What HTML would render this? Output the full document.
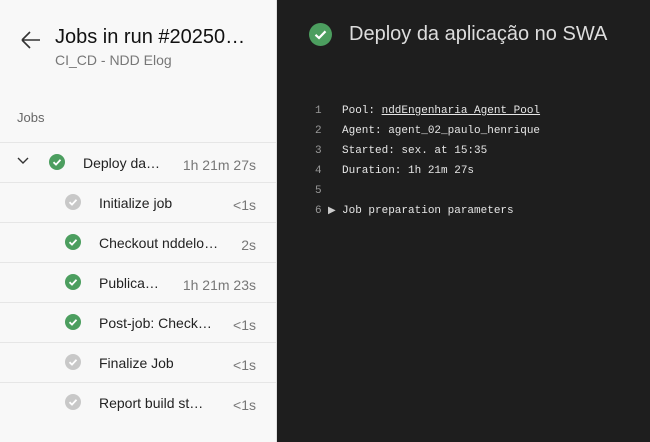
<!DOCTYPE html>
<html><head><meta charset="utf-8"><style>
*{margin:0;padding:0;box-sizing:border-box}
body{width:650px;height:442px;overflow:hidden;font-family:"Liberation Sans",sans-serif;background:#1e1e1e;position:relative}
#left{position:absolute;left:0;top:0;width:277px;height:442px;background:#f8f8f8;border-right:1px solid #e0e0e0}
.abs{position:absolute;white-space:nowrap}
.row{position:absolute;left:0;width:276px;height:40px;border-top:1px solid #e6e6e6}
.ic{position:absolute;width:16px;height:16px;border-radius:50%}
.ic svg{position:absolute;left:0;top:0}
.g{background:#4c9e5f}.gr{background:#c8c8c8}
.nm{position:absolute;font-size:14px;color:#222;top:12px}
.tm{position:absolute;right:20px;font-size:14px;color:#777;top:14px}
#right .ln{position:absolute;left:315px;font-family:"Liberation Mono",monospace;font-size:11px;color:#999}
#right .tx{position:absolute;left:342px;font-family:"Liberation Mono",monospace;font-size:11px;color:#e6e6e6;white-space:nowrap}
</style></head><body>
<div id="left">
<svg class="abs" style="left:21px;top:31px" width="20" height="18" viewBox="0 0 20 18"><path d="M1 9H19M1 9L9 1M1 9L9 17" stroke="#333" stroke-width="1.6" fill="none"/></svg>
<div class="abs" style="left:55px;top:26px;font-size:20px;color:#111">Jobs in run #20250…</div>
<div class="abs" style="left:55px;top:52px;font-size:14px;color:#777">CI_CD - NDD Elog</div>
<div class="abs" style="left:17px;top:110px;font-size:13px;color:#666">Jobs</div>
<div class="row" style="top:142px">
<svg class="abs" style="left:17px;top:14px" width="12" height="8" viewBox="0 0 12 8"><path d="M1 1L6 6L11 1" stroke="#333" stroke-width="1.4" fill="none"/></svg>
<div class="ic g" style="left:49px;top:11px"><svg width="16" height="16"><path d="M4.5 8.2L7 10.6L11.5 5.8" stroke="#fff" stroke-width="1.8" fill="none"/></svg></div>
<div class="nm" style="left:83px">Deploy da…</div><div class="tm">1h 21m 27s</div></div>
<div class="row" style="top:182px"><div class="ic gr" style="left:65px;top:11px"><svg width="16" height="16"><path d="M4.5 8.2L7 10.6L11.5 5.8" stroke="#fff" stroke-width="1.8" fill="none"/></svg></div><div class="nm" style="left:99px">Initialize job</div><div class="tm">&lt;1s</div></div>
<div class="row" style="top:222px"><div class="ic g" style="left:65px;top:11px"><svg width="16" height="16"><path d="M4.5 8.2L7 10.6L11.5 5.8" stroke="#fff" stroke-width="1.8" fill="none"/></svg></div><div class="nm" style="left:99px">Checkout nddelo…</div><div class="tm">2s</div></div>
<div class="row" style="top:262px"><div class="ic g" style="left:65px;top:11px"><svg width="16" height="16"><path d="M4.5 8.2L7 10.6L11.5 5.8" stroke="#fff" stroke-width="1.8" fill="none"/></svg></div><div class="nm" style="left:99px">Publica…</div><div class="tm">1h 21m 23s</div></div>
<div class="row" style="top:302px"><div class="ic g" style="left:65px;top:11px"><svg width="16" height="16"><path d="M4.5 8.2L7 10.6L11.5 5.8" stroke="#fff" stroke-width="1.8" fill="none"/></svg></div><div class="nm" style="left:99px">Post-job: Check…</div><div class="tm">&lt;1s</div></div>
<div class="row" style="top:342px"><div class="ic gr" style="left:65px;top:11px"><svg width="16" height="16"><path d="M4.5 8.2L7 10.6L11.5 5.8" stroke="#fff" stroke-width="1.8" fill="none"/></svg></div><div class="nm" style="left:99px">Finalize Job</div><div class="tm">&lt;1s</div></div>
<div class="row" style="top:382px;height:60px"><div class="ic gr" style="left:65px;top:11px"><svg width="16" height="16"><path d="M4.5 8.2L7 10.6L11.5 5.8" stroke="#fff" stroke-width="1.8" fill="none"/></svg></div><div class="nm" style="left:99px">Report build st…</div><div class="tm">&lt;1s</div></div>
</div>
<div id="right">
<div class="abs" style="left:309px;top:23px;width:23px;height:23px;border-radius:50%;background:#4c9e5f"><svg width="23" height="23"><path d="M6.5 11.8L10 15L16.5 8.3" stroke="#fff" stroke-width="2.2" fill="none"/></svg></div>
<div class="abs" style="left:349px;top:23px;font-size:20px;color:#ddd">Deploy da aplicação no SWA</div>
<div class="ln" style="top:105px">1</div><div class="tx" style="top:105px">Pool: <span style="text-decoration:underline">nddEngenharia Agent Pool</span></div>
<div class="ln" style="top:125px">2</div><div class="tx" style="top:125px">Agent: agent_02_paulo_henrique</div>
<div class="ln" style="top:145px">3</div><div class="tx" style="top:145px">Started: sex. at 15:35</div>
<div class="ln" style="top:165px">4</div><div class="tx" style="top:165px">Duration: 1h 21m 27s</div>
<div class="ln" style="top:185px">5</div>
<div class="ln" style="top:205px">6</div><div class="abs" style="left:328px;top:205px;font-size:10px;color:#ccc">▶</div><div class="tx" style="top:205px">Job preparation parameters</div>
</div>
</body></html>
